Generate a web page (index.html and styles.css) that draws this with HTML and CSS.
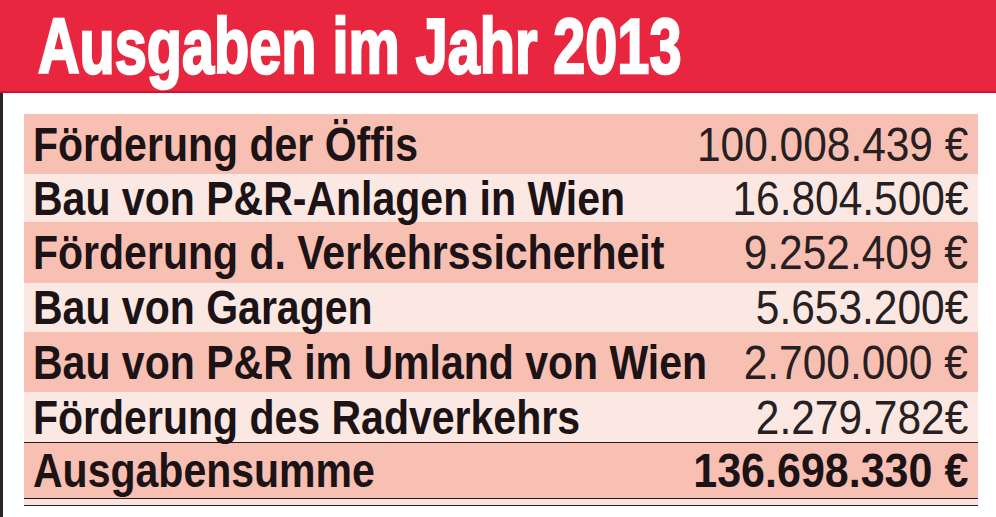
FILE: index.html
```html
<!DOCTYPE html>
<html lang="de">
<head>
<meta charset="utf-8">
<title>Ausgaben im Jahr 2013</title>
<link rel="stylesheet" href="styles.css">
</head>
<body>
<header class="head">
  <h1 class="title">Ausgaben im Jahr 2013</h1>
</header>
<main class="panel">
  <div class="table">
    <div class="row row-dark r1"><span class="label">Förderung der Öffis</span><span class="value">100.008.439 €</span></div>
    <div class="row row-light r2"><span class="label">Bau von P&amp;R-Anlagen in Wien</span><span class="value">16.804.500€</span></div>
    <div class="row row-dark r3"><span class="label">Förderung d. Verkehrssicherheit</span><span class="value">9.252.409 €</span></div>
    <div class="row row-light r4"><span class="label">Bau von Garagen</span><span class="value">5.653.200€</span></div>
    <div class="row row-dark r5"><span class="label">Bau von P&amp;R im Umland von Wien</span><span class="value">2.700.000 €</span></div>
    <div class="row row-light r6"><span class="label">Förderung des Radverkehrs</span><span class="value">2.279.782€</span></div>
    <div class="row row-sum"><span class="label">Ausgabensumme</span><span class="value value-sum">136.698.330 €</span></div>
    <div class="double-rule"></div>
  </div>
</main>
</body>
</html>
```

FILE: styles.css
```css
html, body {
  margin: 0;
  padding: 0;
  background: #ffffff;
}

body {
  width: 996px;
  height: 517px;
  overflow: hidden;
  font-family: "Liberation Sans", Arial, sans-serif;
}

.head {
  height: 91px;
  background: #e9263f;
  border-bottom: 2px solid #cf1332;
  display: flex;
  align-items: center;
  padding-left: 38px;
}

.title {
  margin: 0;
  color: #ffffff;
  font-size: 77px;
  font-weight: 700;
  line-height: 1;
  white-space: nowrap;
  -webkit-text-stroke: 2.5px #ffffff;
  text-shadow: 0 0 1px rgba(80, 0, 10, 0.5);
  transform: scaleX(0.748);
  transform-origin: left center;
  position: relative;
  top: 1px;
}

.panel {
  border-left: 3px solid #2b2325;
  height: 424px;
  padding: 21px 0 0 21px;
  box-sizing: border-box;
}

.table {
  width: 954px;
}

.row {
  display: flex;
  align-items: center;
  padding: 0 10px 0 9px;
  color: #1b1315;
}

.row-dark { background: #f8bfb3; }
.row-light { background: #fce8e2; }

.r1 { height: 60px; }
.r2 { height: 48px; }
.r3 { height: 61px; }
.r4 { height: 49px; }
.r5 { height: 60px; }
.r6 { height: 50px; border-bottom: 1px solid #231a1b; }

.row-sum {
  height: 55px;
  background: #f8bfb3;
  border-bottom: 1px solid #231a1b;
}

.label,
.value {
  display: block;
  white-space: nowrap;
  line-height: 1;
}

.label {
  flex: 1 1 0;
  min-width: 0;
  font-size: 49px;
  font-weight: 700;
  transform: scaleX(0.837);
  transform-origin: left center;
}

.value {
  flex: none;
  font-size: 49px;
  font-weight: 400;
  color: #262022;
  transform: scaleX(0.866);
  transform-origin: right center;
}

.value-sum {
  font-weight: 700;
  color: #1b1315;
  transform: scaleX(0.878);
}

.double-rule {
  height: 6px;
  background: #fbe3dd;
  border-bottom: 1px solid #2b2325;
}
```
